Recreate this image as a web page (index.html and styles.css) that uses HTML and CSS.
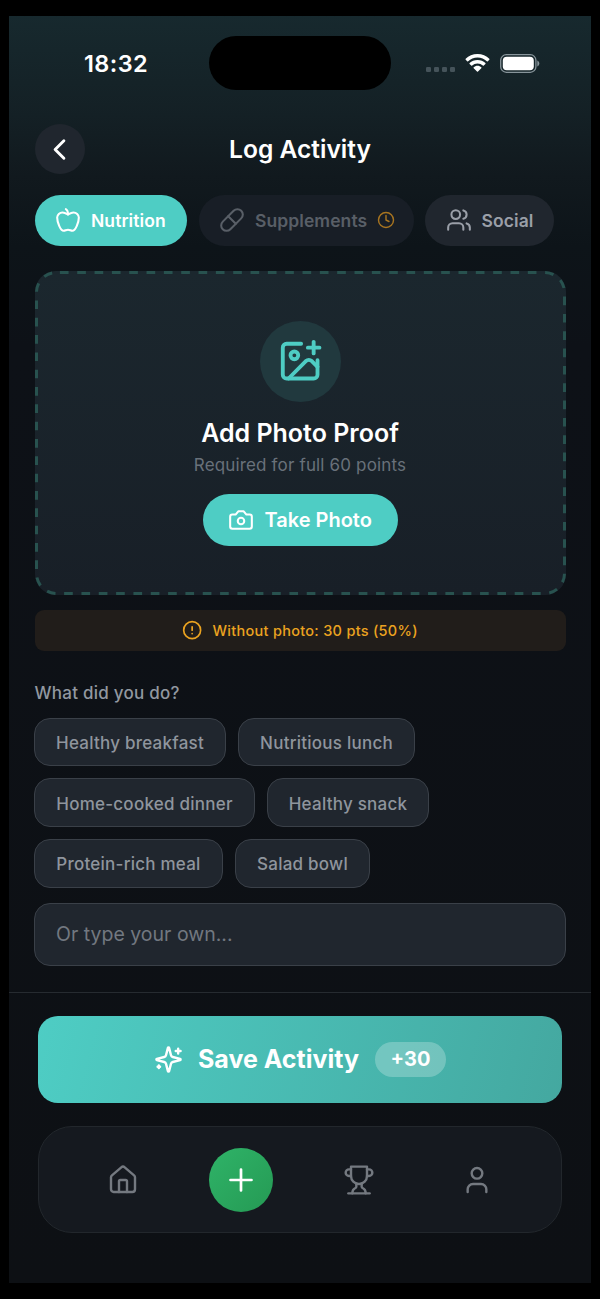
FILE: index.html
```html
<!DOCTYPE html>
<html lang="en">
<head>
<meta charset="utf-8">
<title>Log Activity</title>
<link rel="stylesheet" href="styles.css">
</head>
<body>
<div class="phone">
  <div class="status">
    <div class="time">18:32</div>
    <div class="island"></div>
    <div class="indicators">
      <div class="dots"><i></i><i></i><i></i><i></i></div>
      <svg class="wifi" viewBox="0 0 24 18"><path fill="#fff" d="M12 0C7.300 0 3.100 1.800.2 4.700c-.3.300-.3.700 0 1l1.500 1.500c.3.300.7.300 1 0C5.100 4.900 8.400 3.500 12 3.500s6.900 1.400 9.300 3.700c.3.300.7.300 1 0l1.500-1.500c.3-.3.3-.7 0-1C20.900 1.800 16.700 0 12 0Z"/><path fill="#fff" d="M12 5.900c-3.100 0-5.900 1.200-7.900 3.200-.3.300-.3.700 0 1l1.600 1.500c.3.300.7.300 1 0 1.400-1.300 3.200-2.200 5.300-2.200s3.900.9 5.300 2.200c.3.300.7.300 1 0l1.600-1.500c.3-.3.3-.7 0-1-2-2-4.800-3.200-7.900-3.200Z"/><path fill="#fff" d="M12 11.800c-1.500 0-2.800.6-3.800 1.500-.3.300-.3.700 0 1l3.300 3.300c.3.300.7.300 1 0l3.300-3.300c.3-.3.3-.7 0-1-1-.9-2.300-1.500-3.800-1.500Z"/></svg>
      <svg class="battery" viewBox="0 0 40 19"><rect x=".7" y=".7" width="35.200" height="17.600" rx="5.600" fill="none" stroke="#87949a" stroke-width="1.300"/><rect x="2.800" y="2.800" width="31" height="13.400" rx="3.900" fill="#fff"/><path d="M37.300 6.500v6c1.200-.5 2-1.600 2-3s-.8-2.500-2-3Z" fill="#87949a"/></svg>
    </div>
  </div>

  <header class="header">
    <button class="back"><svg class="icon" viewBox="0 0 24 24"><path d="m15 18-6-6 6-6"/></svg></button>
    <h1 class="title">Log Activity</h1>
  </header>

  <div class="tabs">
    <button class="tab tab-active">
      <svg class="icon" viewBox="0 0 24 24"><path d="M12 20.940c1.500 0 2.750 1.060 4 1.060 3 0 6-8 6-12.220A4.910 4.910 0 0 0 17 5c-2.220 0-4 1.440-5 2-1-.56-2.780-2-5-2a4.900 4.900 0 0 0-5 4.780C2 14 5 22 8 22c1.250 0 2.500-1.060 4-1.060Z"/><path d="M10 2c1 .5 2 2 2 5"/></svg>
      <span>Nutrition</span>
    </button>
    <button class="tab tab-locked">
      <svg class="icon" viewBox="0 0 24 24"><path d="m10.500 20.500 10-10a4.950 4.950 0 1 0-7-7l-10 10a4.950 4.950 0 1 0 7 7Z"/><path d="m8.500 8.500 7 7"/></svg>
      <span>Supplements</span>
      <svg class="icon clock" viewBox="0 0 24 24"><circle cx="12" cy="12" r="10"/><path d="M12 6v6l4 2"/></svg>
    </button>
    <button class="tab tab-social">
      <svg class="icon" viewBox="0 0 24 24"><path d="M16 21v-2a4 4 0 0 0-4-4H6a4 4 0 0 0-4 4v2"/><circle cx="9" cy="7" r="4"/><path d="M22 21v-2a4 4 0 0 0-3-3.870"/><path d="M16 3.130a4 4 0 0 1 0 7.750"/></svg>
      <span>Social</span>
    </button>
  </div>

  <section class="proof">
    <svg class="proof-outline" viewBox="0 0 531 324"><rect x="1.500" y="1.500" width="528" height="321" rx="20"/></svg>
    <div class="proof-icon"><svg class="icon" viewBox="0 0 24 24"><path d="M16 5h6"/><path d="M19 2v6"/><path d="M21 11.500V19a2 2 0 0 1-2 2H5a2 2 0 0 1-2-2V5a2 2 0 0 1 2-2h7.500"/><path d="m21 15-3.086-3.086a2 2 0 0 0-2.828 0L6 21"/><circle cx="9" cy="9" r="2"/></svg></div>
    <h2 class="proof-title">Add Photo Proof</h2>
    <p class="proof-sub">Required for full 60 points</p>
    <button class="take">
      <svg class="icon" viewBox="0 0 24 24"><path d="M14.500 4h-5L7 7H4a2 2 0 0 0-2 2v9a2 2 0 0 0 2 2h16a2 2 0 0 0 2-2V9a2 2 0 0 0-2-2h-3l-2.500-3z"/><circle cx="12" cy="13" r="3"/></svg>
      <span>Take Photo</span>
    </button>
  </section>

  <div class="warning">
    <svg class="icon" viewBox="0 0 24 24"><circle cx="12" cy="12" r="10"/><path d="M12 8v4M12 16h.01"/></svg>
    <span>Without photo: 30 pts (50%)</span>
  </div>

  <p class="label">What did you do?</p>
  <div class="chips">
    <div class="chip-row"><button class="chip c1">Healthy breakfast</button><button class="chip c2">Nutritious lunch</button></div>
    <div class="chip-row"><button class="chip c3">Home-cooked dinner</button><button class="chip c4">Healthy snack</button></div>
    <div class="chip-row"><button class="chip c5">Protein-rich meal</button><button class="chip c6">Salad bowl</button></div>
  </div>
  <div class="field">Or type your own...</div>

  <footer class="footer">
    <button class="save">
      <svg class="icon" viewBox="0 0 24 24"><path d="M9.937 15.500A2 2 0 0 0 8.500 14.063l-6.135-1.582a.5.5 0 0 1 0-.962L8.500 9.936A2 2 0 0 0 9.937 8.500l1.582-6.135a.5.5 0 0 1 .963 0L14.063 8.500A2 2 0 0 0 15.500 9.937l6.135 1.581a.5.5 0 0 1 0 .964L15.500 14.063a2 2 0 0 0-1.437 1.437l-1.582 6.135a.5.5 0 0 1-.963 0z"/><path d="M20 3v4M22 5h-4M4 17v2M5 18H3"/></svg>
      <span class="save-text">Save Activity</span>
      <span class="points">+30</span>
    </button>
    <nav class="nav">
      <a class="nav-item"><svg class="icon" viewBox="0 0 24 24"><path d="M15 21v-8a1 1 0 0 0-1-1h-4a1 1 0 0 0-1 1v8"/><path d="M3 10a2 2 0 0 1 .709-1.528l7-5.999a2 2 0 0 1 2.582 0l7 5.999A2 2 0 0 1 21 10v9a2 2 0 0 1-2 2H5a2 2 0 0 1-2-2z"/></svg></a>
      <a class="nav-item"><span class="add"><svg class="icon" viewBox="0 0 24 24"><path d="M5 12h14M12 5v14"/></svg></span></a>
      <a class="nav-item"><svg class="icon" viewBox="0 0 24 24"><path d="M6 9H4.500a2.500 2.500 0 0 1 0-5H6"/><path d="M18 9h1.500a2.500 2.500 0 0 0 0-5H18"/><path d="M4 22h16"/><path d="M10 14.660V17c0 .55-.47.98-.97 1.210C7.850 18.750 7 20.240 7 22"/><path d="M14 14.660V17c0 .55.47.98.97 1.210C16.150 18.750 17 20.240 17 22"/><path d="M18 2H6v7a6 6 0 0 0 12 0V2Z"/></svg></a>
      <a class="nav-item"><svg class="icon" viewBox="0 0 24 24"><path d="M19 21v-2a4 4 0 0 0-4-4H9a4 4 0 0 0-4 4v2"/><circle cx="12" cy="7" r="4"/></svg></a>
    </nav>
  </footer>
</div>
</body>
</html>
```
FILE: styles.css
```css
* { box-sizing: border-box; }
html, body { margin: 0; background: #000; }
body {
  height: 1299px;
  padding: 16px 9px 0;
  overflow: hidden;
  font-family: Inter, "Liberation Sans", sans-serif;
  color: #fff;
}
h1, h2, p { margin: 0; }
button {
  border: 0;
  padding: 0;
  margin: 0;
  background: none;
  color: inherit;
  font: inherit;
  letter-spacing: inherit;
  white-space: nowrap;
}
.icon {
  display: block;
  flex: none;
  width: 26px;
  height: 26px;
  fill: none;
  stroke: currentColor;
  stroke-width: 2;
  stroke-linecap: round;
  stroke-linejoin: round;
}
.phone {
  display: flex;
  flex-direction: column;
  width: 582px;
  height: 1266.500px;
  background: linear-gradient(180deg, #17292e 0, #142025 100px, #11191e 160px, #0d1419 230px, #0d1117 330px, #0d1014 100%);
}

/* Status bar */
.status {
  display: grid;
  grid-template-columns: 200px 182px 200px;
  height: 94px;
  align-items: center;
}
.time {
  padding: 2px 0 0 75px;
  font-size: 23.500px;
  font-weight: 600;
  letter-spacing: .4px;
  line-height: 30px;
}
.island { height: 54px; border-radius: 27px; background: #000; }
.indicators { display: flex; align-items: center; padding-left: 35px; }
.dots { display: flex; gap: 3px; margin: 13px 10px 0 0; }
.dots i { width: 5px; height: 5px; border-radius: 1.200px; background: #45535a; }
.wifi { width: 25px; height: 18px; margin-right: 10px; }
.battery { width: 40px; height: 19px; }

/* Header */
.header {
  display: grid;
  grid-template-columns: 51px 1fr 51px;
  align-items: center;
  height: 51px;
  margin: 13.500px 25.500px 0;
}
.back {
  display: grid;
  place-items: center;
  width: 50.500px;
  height: 50.500px;
  border-radius: 50%;
  background: #20262e;
}
.back .icon { width: 35px; height: 35px; }
.title { text-align: center; font-size: 24.600px; font-weight: 600; line-height: 34px; }

/* Category tabs */
.tabs { display: flex; margin: 20px 25.500px 0; gap: 11.500px; }
.tab {
  display: flex;
  align-items: center;
  height: 51.500px;
  padding: 0 20.500px;
  gap: 10px;
  border-radius: 26px;
  background: #20262e;
  font-size: 17.500px;
  font-weight: 600;
  letter-spacing: .08px;
  color: #9a9fa8;
}
.tab .icon { stroke-width: 1.900; }
.tab-active { width: 152.500px; background: #4ecdc4; color: #fff; }
.tab-locked { width: 215px; background: #181e26; color: #595f67; }
.tab-social { width: 129px; }
.tab .clock { width: 18px; height: 18px; color: #a87520; }

/* Photo proof card */
.proof {
  position: relative;
  display: flex;
  flex-direction: column;
  align-items: center;
  height: 324px;
  margin: 25px 25.500px 0;
  padding-top: 49.500px;
  border-radius: 21px;
  background: linear-gradient(180deg, #1b272e, #181f27);
}
.proof-outline { position: absolute; inset: 0; width: 531px; height: 324px; }
.proof-outline rect {
  fill: none;
  stroke: #28524f;
  stroke-width: 3;
  stroke-dasharray: 8.665 8.665;
  stroke-dashoffset: -3.400;
}
.proof-icon {
  display: grid;
  place-items: center;
  width: 81px;
  height: 81px;
  border-radius: 50%;
  background: #21393e;
  color: #4ecdc4;
}
.proof-icon .icon { width: 46.300px; height: 46.300px; }
.proof-title { margin-top: 14px; font-size: 25px; font-weight: 600; line-height: 34px; }
.proof-sub { margin-top: 3px; font-size: 17px; line-height: 24px; letter-spacing: .16px; color: #69717a; }
.take {
  display: flex;
  align-items: center;
  gap: 10.500px;
  width: 195px;
  height: 52px;
  margin-top: 17.500px;
  padding-left: 25.500px;
  border-radius: 26px;
  background: #4ecdc4;
  font-size: 20px;
  font-weight: 600;
}
.take .icon { stroke-width: 1.900; }

/* Reduced-points notice */
.warning {
  display: flex;
  align-items: center;
  justify-content: center;
  gap: 10px;
  height: 41px;
  margin: 15px 25.500px 0;
  border-radius: 9px;
  background: #211d1a;
  color: #eba320;
  font-size: 14.500px;
  font-weight: 500;
  letter-spacing: .29px;
}
.warning .icon { width: 20.300px; height: 20.300px; }

/* Activity description */
.label { margin: 29.500px 0 0 25.500px; font-size: 17px; font-weight: 500; line-height: 24px; letter-spacing: .25px; color: #9298a0; }
.chips { display: flex; flex-direction: column; gap: 12px; margin: 13px 25px 0; }
.chip-row { display: flex; gap: 12px; }
.chip {
  height: 48.700px;
  padding-top: 2px;
  border: 1.400px solid #3a4048;
  border-radius: 16px;
  background: #20262e;
  color: #8f959d;
  font-size: 17px;
  font-weight: 500;
  letter-spacing: .24px;
}
.c1 { width: 192px; }
.c2 { width: 177px; }
.c3 { width: 221px; }
.c4 { width: 162px; }
.c5 { width: 189px; }
.c6 { width: 135px; }
.field {
  height: 63px;
  margin: 15px 25.500px 0 25px;
  padding: 0 21px;
  border: 1.400px solid #3a4048;
  border-radius: 16px;
  background: #20262e;
  color: #727880;
  font-size: 19.500px;
  line-height: 61px;
}

/* Save button and bottom navigation */
.footer {
  flex: 1;
  display: flex;
  flex-direction: column;
  margin-top: 26px;
  padding: 23px 29px 0;
  border-top: 1.500px solid #262b30;
}
.save {
  display: flex;
  align-items: center;
  justify-content: center;
  height: 87px;
  border-radius: 20px;
  background: linear-gradient(105deg, #4ecdc4, #44a8a0);
}
.save .icon { width: 29px; height: 29px; }
.save-text { margin: 0 16px 0 15px; font-size: 25px; font-weight: 700; }
.points {
  width: 71px;
  border-radius: 18px;
  background: rgba(255, 255, 255, .24);
  font-size: 20px;
  font-weight: 700;
  line-height: 35px;
}
.nav {
  display: flex;
  align-items: center;
  height: 107px;
  margin-top: 23.500px;
  padding: 0 24.500px;
  border: 1.400px solid #22272c;
  border-radius: 34px;
  background: #15191f;
  color: #747980;
}
.nav-item { flex: 1; display: grid; place-items: center; }
.nav-item > .icon { width: 32px; height: 32px; stroke-width: 1.800; }
.add {
  display: grid;
  place-items: center;
  width: 64px;
  height: 64px;
  border-radius: 50%;
  background: linear-gradient(135deg, #2fb368, #259a54);
  color: #fff;
}
.add .icon { width: 36px; height: 36px; stroke-width: 1.800; }
```
